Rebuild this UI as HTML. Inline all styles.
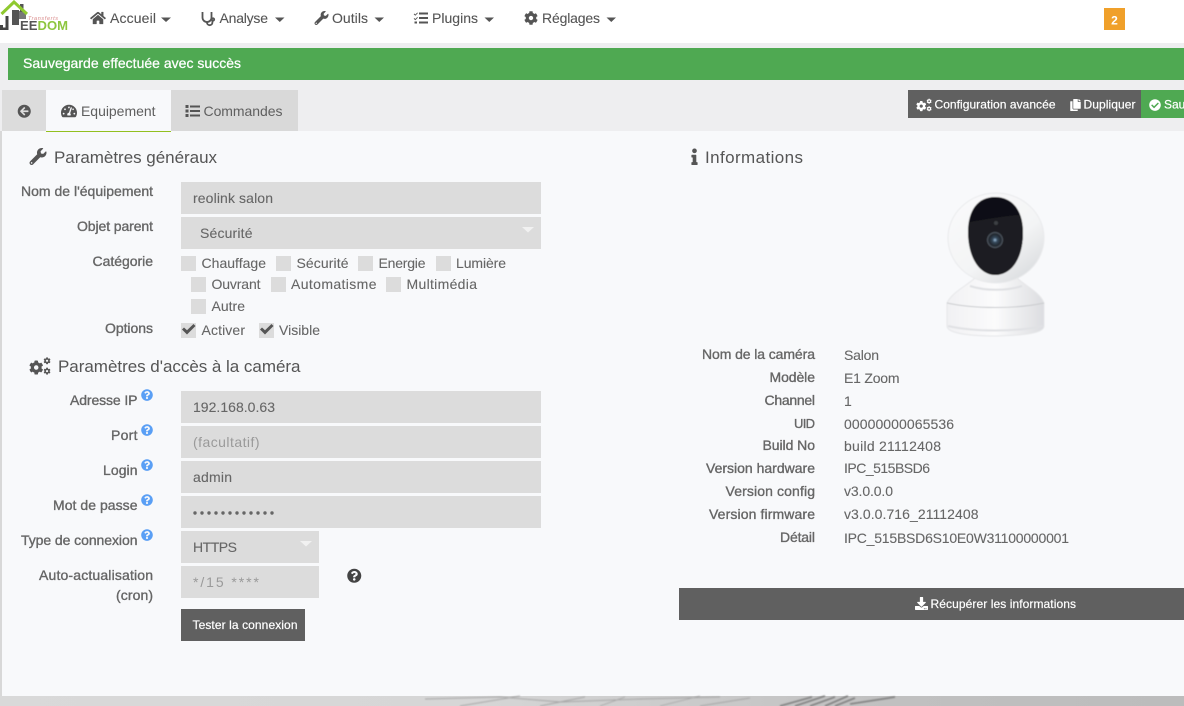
<!DOCTYPE html>
<html lang="fr"><head><meta charset="utf-8"><title>Jeedom</title>
<style>
html,body{margin:0;padding:0;width:1184px;height:706px;overflow:hidden;background:#eeeef0}
svg{display:block}
text{font-family:"Liberation Sans",sans-serif;font-size:14px;fill:#666}
.lb{fill:#666;stroke:#666;stroke-width:.35;text-anchor:end}
.v{fill:#666;stroke:#666;stroke-width:.1}
.n{fill:#555;stroke:#555;stroke-width:.1}
.h{font-size:17px;fill:#555}
.w{fill:#fff;font-size:12px;stroke:#fff;stroke-width:.2}
.f{fill:#dcdcdc}
.p{fill:#9a9a9a}
.i{fill:#555}
</style></head><body>
<svg xmlns="http://www.w3.org/2000/svg" width="1184" height="706" viewBox="0 0 1184 706">
<defs>
<symbol id="wrench" viewBox="0 0 512 512"><path d="M507.73 109.1c-2.24-9.03-13.54-12.09-20.12-5.51l-74.36 74.36-67.88-11.31-11.31-67.88 74.36-74.36c6.62-6.62 3.43-17.9-5.66-20.16-47.38-11.74-99.55.91-136.58 37.93-39.64 39.64-50.55 97.1-34.05 147.2L18.74 402.76c-24.99 24.99-24.99 65.51 0 90.5 24.99 24.99 65.51 24.99 90.5 0l213.21-213.21c50.12 16.71 107.47 5.68 147.37-34.22 37.07-37.07 49.7-89.32 37.91-136.73zM64 472c-13.25 0-24-10.75-24-24 0-13.26 10.75-24 24-24s24 10.74 24 24c0 13.25-10.75 24-24 24z"/></symbol>
<symbol id="home" viewBox="0 0 576 512"><path d="M280.37 148.26L96 300.11V464a16 16 0 0 0 16 16l112.06-.29a16 16 0 0 0 15.92-16V368a16 16 0 0 1 16-16h64a16 16 0 0 1 16 16v95.64a16 16 0 0 0 16 16.05L464 480a16 16 0 0 0 16-16V300L295.67 148.26a12.19 12.19 0 0 0-15.3 0zM571.6 251.47L488 182.56V44.05a12 12 0 0 0-12-12h-56a12 12 0 0 0-12 12v72.61L318.47 43a48 48 0 0 0-61 0L4.34 251.47a12 12 0 0 0-1.6 16.9l25.5 31A12 12 0 0 0 45.15 301l235.22-193.74a12.19 12.19 0 0 1 15.3 0L530.9 301a12 12 0 0 0 16.9-1.6l25.5-31a12 12 0 0 0-1.7-16.93z"/></symbol>
<symbol id="cog" viewBox="0 0 512 512"><path d="M487.4 315.7l-42.6-24.6c4.3-23.2 4.3-47 0-70.2l42.6-24.6c4.9-2.8 7.1-8.6 5.5-14-11.1-35.6-30-67.8-54.7-94.6-3.8-4.1-10-5.1-14.8-2.3L380.8 110c-17.9-15.4-38.5-27.3-60.8-35.1V25.8c0-5.6-3.9-10.5-9.4-11.7-36.7-8.2-74.3-7.8-109.2 0-5.5 1.2-9.4 6.1-9.4 11.7V75c-22.2 7.9-42.8 19.8-60.8 35.1L88.7 85.5c-4.9-2.8-11-1.9-14.8 2.3-24.7 26.7-43.6 58.9-54.7 94.6-1.7 5.4.6 11.2 5.5 14L67.3 221c-4.3 23.2-4.3 47 0 70.2l-42.6 24.6c-4.9 2.8-7.1 8.6-5.5 14 11.1 35.6 30 67.8 54.7 94.6 3.8 4.1 10 5.1 14.8 2.3l42.6-24.6c17.9 15.4 38.5 27.3 60.8 35.1v49.2c0 5.6 3.9 10.5 9.4 11.7 36.7 8.2 74.3 7.8 109.2 0 5.5-1.2 9.4-6.1 9.4-11.7v-49.2c22.2-7.9 42.8-19.8 60.8-35.1l42.6 24.6c4.9 2.8 11 1.9 14.8-2.3 24.7-26.7 43.6-58.9 54.7-94.6 1.5-5.5-.7-11.3-5.6-14.1zM256 336c-44.1 0-80-35.9-80-80s35.9-80 80-80 80 35.9 80 80-35.9 80-80 80z"/></symbol>
<symbol id="q" viewBox="0 0 512 512"><path d="M504 256c0 136.997-111.043 248-248 248S8 392.997 8 256C8 119.083 119.043 8 256 8s248 111.083 248 248zM262.655 90c-54.497 0-89.255 22.957-116.549 63.758-3.536 5.286-2.353 12.415 2.715 16.258l34.699 26.31c5.205 3.947 12.621 3.008 16.665-2.122 17.864-22.658 30.113-35.797 57.303-35.797 20.429 0 45.698 13.148 45.698 32.958 0 14.976-12.363 22.667-32.534 33.976C247.128 238.528 216 254.941 216 296v4c0 6.627 5.373 12 12 12h56c6.627 0 12-5.373 12-12v-1.333c0-28.462 83.186-29.647 83.186-106.667 0-58.002-60.165-102-116.531-102zM256 338c-25.365 0-46 20.635-46 46 0 25.364 20.635 46 46 46s46-20.636 46-46c0-25.365-20.635-46-46-46z"/></symbol>
<symbol id="chk" viewBox="0 0 512 512"><path d="M504 256c0 136.967-111.033 248-248 248S8 392.967 8 256 119.033 8 256 8s248 111.033 248 248zM227.314 387.314l184-184c6.248-6.248 6.248-16.379 0-22.627l-22.627-22.627c-6.248-6.249-16.379-6.249-22.628 0L216 308.118l-70.059-70.059c-6.248-6.248-16.379-6.248-22.628 0l-22.627 22.627c-6.248 6.248-6.248 16.379 0 22.627l104 104c6.249 6.249 16.379 6.249 22.628.001z"/></symbol>
<symbol id="back" viewBox="0 0 512 512"><path d="M256 504C119 504 8 393 8 256S119 8 256 8s248 111 248 248-111 248-248 248zm28.9-143.6L209.4 288H392c13.3 0 24-10.7 24-24v-16c0-13.3-10.7-24-24-24H209.4l75.5-72.4c9.7-9.3 9.9-24.8.4-34.3l-11-10.9c-9.4-9.4-24.6-9.4-33.9 0L107.7 239c-9.4 9.4-9.4 24.6 0 33.9l132.7 132.7c9.4 9.4 24.6 9.4 33.9 0l11-11c9.5-9.5 9.3-25-.4-34.3z"/></symbol>
<symbol id="dl" viewBox="0 0 512 512"><path d="M216 0h80c13.3 0 24 10.7 24 24v168h87.7c17.8 0 26.7 21.5 14.1 34.1L269.7 378.3c-7.5 7.5-19.8 7.5-27.3 0L90.1 226.1c-12.6-12.6-3.7-34.1 14.1-34.1H192V24c0-13.3 10.7-24 24-24zm296 376v112c0 13.3-10.7 24-24 24H24c-13.3 0-24-10.7-24-24V376c0-13.3 10.7-24 24-24h146.7l49 49c20.1 20.1 52.5 20.1 72.6 0l49-49H488c13.3 0 24 10.7 24 24zm-124 88c0-11-9-20-20-20s-20 9-20 20 9 20 20 20 20-9 20-20zm64 0c0-11-9-20-20-20s-20 9-20 20 9 20 20 20 20-9 20-20z"/></symbol>
<symbol id="copy" viewBox="0 0 448 512"><path d="M320 448v40c0 13.255-10.745 24-24 24H24c-13.255 0-24-10.745-24-24V120c0-13.255 10.745-24 24-24h72v296c0 30.879 25.121 56 56 56h168zm0-344V0H152c-13.255 0-24 10.745-24 24v368c0 13.255 10.745 24 24 24h272c13.255 0 24-10.745 24-24V128H344c-13.2 0-24-10.8-24-24zm120.971-31.029L375.029 7.029A24 24 0 0 0 358.059 0H352v96h96v-6.059a24 24 0 0 0-7.029-16.97z"/></symbol>
<symbol id="info" viewBox="0 0 192 512"><path d="M20 424.229h20V279.771H20c-11.046 0-20-8.954-20-20V212c0-11.046 8.954-20 20-20h112c11.046 0 20 8.954 20 20v212.229h20c11.046 0 20 8.954 20 20V492c0 11.046-8.954 20-20 20H20c-11.046 0-20-8.954-20-20v-47.771c0-11.046 8.954-20 20-20zM96 0C56.235 0 24 32.235 24 72s32.235 72 72 72 72-32.235 72-72S135.764 0 96 0z"/></symbol>
<symbol id="tach" viewBox="0 0 576 512"><path d="M288 32C128.94 32 0 160.94 0 320c0 52.8 14.25 102.26 39.06 144.8 5.61 9.62 16.3 15.2 27.44 15.2h443c11.14 0 21.83-5.58 27.44-15.2C561.75 422.26 576 372.8 576 320c0-159.06-128.94-288-288-288zm0 64c14.71 0 26.58 10.13 30.32 23.65-1.11 2.26-2.64 4.23-3.45 6.67l-9.22 27.67c-5.13 3.49-10.97 6.01-17.64 6.01-17.67 0-32-14.33-32-32S270.33 96 288 96zM96 384c-17.67 0-32-14.33-32-32s14.33-32 32-32 32 14.33 32 32-14.33 32-32 32zm48-160c-17.67 0-32-14.33-32-32s14.33-32 32-32 32 14.33 32 32-14.33 32-32 32zm246.77-72.41l-61.33 184C343.13 347.33 352 364.54 352 384c0 11.72-3.38 22.55-8.88 32H232.88c-5.5-9.45-8.88-20.28-8.88-32 0-33.94 26.5-61.43 59.9-63.59l61.34-184.01c4.17-12.56 17.73-19.45 30.36-15.17 12.57 4.19 19.35 17.79 15.17 30.36zm14.66 57.2l15.52-46.55c3.47-1.29 7.13-2.23 11.05-2.23 17.67 0 32 14.33 32 32s-14.33 32-32 32c-11.38-.01-20.89-6.28-26.57-15.22zM480 384c-17.67 0-32-14.33-32-32s14.33-32 32-32 32 14.33 32 32-14.33 32-32 32z"/></symbol>
<symbol id="cogs" viewBox="0 0 640 512"><use href="#cog" x="0" y="90" width="420" height="420"/><use href="#cog" x="420" y="0" width="210" height="210"/><use href="#cog" x="420" y="300" width="210" height="210"/></symbol>
<symbol id="tick" viewBox="0 0 15 15"><path d="M1 7.500L3 5.500 6 8.300 12.500 2 14.500 4 6 12.500z"/></symbol>
<linearGradient id="ball" x1="0.1" y1="0" x2="0.9" y2="1"><stop offset="0" stop-color="#fafafb"/><stop offset=".6" stop-color="#f3f4f5"/><stop offset="1" stop-color="#d6d8db"/></linearGradient>
<linearGradient id="base" x1="0" y1="0" x2="1" y2="0"><stop offset="0" stop-color="#f1f1f3"/><stop offset=".5" stop-color="#fbfbfc"/><stop offset="1" stop-color="#dcdde0"/></linearGradient>
<radialGradient id="lens"><stop offset="0" stop-color="#9fc0dc"/><stop offset=".3" stop-color="#35495c"/><stop offset=".75" stop-color="#20252c"/><stop offset="1" stop-color="#59616c"/></radialGradient>
<filter id="soft" x="-10%" y="-10%" width="120%" height="120%"><feGaussianBlur stdDeviation=".6"/></filter>
<filter id="soft2" x="-5%" y="-50%" width="110%" height="200%"><feGaussianBlur stdDeviation=".7"/></filter>
<linearGradient id="bot" x1="0" y1="0" x2="1" y2="0"><stop offset="0" stop-color="#d9d9d9"/><stop offset=".4" stop-color="#d6d6d6"/><stop offset=".75" stop-color="#c0c0c0"/><stop offset="1" stop-color="#bcbcbc"/></linearGradient>
</defs>

<!-- page backgrounds -->
<rect width="1184" height="706" fill="#eeeef0"/>
<rect width="1184" height="43" fill="#fff"/>
<rect x="0" y="131" width="2" height="565" fill="#d8d8d8"/>
<rect x="2" y="131" width="1182" height="565" fill="#f8f9fb"/>
<rect y="696" width="1184" height="10" fill="url(#bot)"/>
<g stroke="#a4a4a4" stroke-width=".9" fill="none" filter="url(#soft2)">
<path d="M425 699L500 697 560 702 640 699 720 697M460 706L520 696M540 706L585 697M600 706L625 697M660 706L700 696M700 706L750 698"/>
<path d="M780 706L812 697M795 706L825 696M810 706L835 697M825 706L848 696M835 706L855 698M850 704L895 697" stroke="#7c7c7c" stroke-width="1.600"/>
</g>

<!-- logo -->
<g>
<rect x="12" y="10" width="7" height="15" fill="#555"/>
<rect x="19" y="11" width="7" height="8" fill="#777"/>
<rect x="20" y="4" width="3.500" height="8" fill="#555"/>
<path d="M1.500 14L14 2 27 14" fill="none" stroke="#8fc92f" stroke-width="3"/>
<path d="M0 25H3V27.500H5.500V16H8.500V30H0z" fill="#444"/>
<text x="20" y="30" lengthAdjust="spacingAndGlyphs" textLength="17.500" style="font-size:12.600px;font-weight:700;fill:#555">EE</text>
<text x="37.500" y="30" lengthAdjust="spacingAndGlyphs" textLength="30.500" style="font-size:12.600px;font-weight:700;fill:#8dc63f">DOM</text>
<text x="28" y="20" style="font-size:5.500px;fill:#d98a8a;font-style:italic" textLength="30">Transferts</text>
</g>

<!-- nav -->
<use href="#home" x="90" y="11" width="16" height="14" class="i"/>
<text class="n" x="110" y="23" textLength="46">Accueil</text>
<path d="M161 17.500h10l-5 4.500z" fill="#555"/>
<g fill="none" stroke="#555" stroke-width="1.800"><path d="M202.500 12v5.500a4.500 4.500 0 0 0 9 0V12"/><path d="M207 22v.5a2.700 2.700 0 0 0 5.400 0V21"/><circle cx="213" cy="19.500" r="1.200"/></g>
<text class="n" x="219.500" y="23" textLength="48.500">Analyse</text>
<path d="M275 17.500h9.500l-4.700 4.500z" fill="#555"/>
<use href="#wrench" x="314" y="11" width="15" height="14" class="i"/>
<text class="n" x="332" y="23" textLength="36">Outils</text>
<path d="M374.500 17.500h9.500l-4.700 4.500z" fill="#555"/>
<g fill="#555"><rect x="419" y="12.500" width="9" height="2"/><rect x="419" y="17" width="9" height="2"/><rect x="419" y="21.500" width="9" height="2"/><path d="M414.300 13.500l1 1 2-2 .6.6-2.600 2.700-1.600-1.600zM414.300 18l1 1 2-2 .6.6-2.600 2.700-1.600-1.600z"/><rect x="414.500" y="21.500" width="2.500" height="2"/></g>
<text class="n" x="432" y="23" textLength="46">Plugins</text>
<path d="M484.500 17.500h9.500l-4.700 4.500z" fill="#555"/>
<use href="#cog" x="524" y="11" width="14" height="14" class="i"/>
<text class="n" x="542" y="23" textLength="58">Réglages</text>
<path d="M606.500 17.500h9.500l-4.700 4.500z" fill="#555"/>
<rect x="1104" y="8" width="21" height="22" fill="#f0a02a"/>
<text x="1114.500" y="24.500" text-anchor="middle" style="font-size:12px;font-weight:700;fill:#fff">2</text>

<!-- alert -->
<rect x="8" y="48" width="1176" height="32" fill="#4fa952"/>
<text x="23" y="68" textLength="218" style="fill:#fff;stroke:#fff;stroke-width:.25">Sauvegarde effectuée avec succès</text>

<!-- tabs -->
<rect x="2" y="90" width="44" height="41" fill="#dcdcdc"/>
<use href="#back" x="17.500" y="104.500" width="13.500" height="13.500" class="i"/>
<rect x="46" y="90" width="125" height="41" fill="#f8f9fb"/>
<rect x="46" y="131" width="125" height="1" fill="#93c01f"/>
<use href="#tach" x="61" y="103.500" width="16" height="15" class="i"/>
<text x="81" y="116" textLength="74.500" style="fill:#5f5f5f">Equipement</text>
<rect x="171" y="90" width="127" height="41" fill="#d9d9d9"/>
<g fill="#555"><rect x="185.500" y="105" width="3" height="3"/><rect x="185.500" y="109.500" width="3" height="3"/><rect x="185.500" y="114" width="3" height="3"/><rect x="190" y="105.500" width="10" height="2"/><rect x="190" y="110" width="10" height="2"/><rect x="190" y="114.500" width="10" height="2"/></g>
<text x="203.500" y="116" textLength="79" style="fill:#5f5f5f">Commandes</text>

<!-- action buttons -->
<rect x="908" y="90" width="233" height="28" fill="#606060"/>
<rect x="1141" y="90" width="43" height="28" fill="#4fa952"/>
<use href="#cogs" x="916" y="98.500" width="16" height="13" fill="#fff"/>
<text class="w" x="934.500" y="108.500" textLength="121">Configuration avancée</text>
<use href="#copy" x="1070" y="99" width="11" height="12" fill="#fff"/>
<text class="w" x="1083.500" y="108.500" textLength="52">Dupliquer</text>
<use href="#chk" x="1149" y="99" width="12" height="12" fill="#fff"/>
<text class="w" x="1164" y="108.500">Sauvegarder</text>

<!-- section headings -->
<use href="#wrench" x="29" y="148" width="18" height="17" class="i"/>
<text class="h" x="54" y="163" textLength="163">Paramètres généraux</text>
<use href="#cogs" x="29" y="357" width="22" height="18" class="i"/>
<text class="h" x="58" y="372" textLength="242.500">Paramètres d'accès à la caméra</text>
<use href="#info" x="691" y="148.500" width="7" height="16.500" class="i"/>
<text class="h" x="705" y="163" textLength="98">Informations</text>

<!-- general form -->
<text class="lb" x="153" y="196" textLength="132">Nom de l'équipement</text>
<rect class="f" x="181" y="182" width="360" height="32"/>
<text class="v" x="193" y="203" textLength="80">reolink salon</text>
<text class="lb" x="153" y="231" textLength="76">Objet parent</text>
<rect class="f" x="181" y="217" width="360" height="32"/>
<text class="v" x="200" y="238" textLength="52.500">Sécurité</text>
<path d="M522 227h12l-6 5.500z" fill="#f1f1f1"/>
<text class="lb" x="153" y="266" textLength="60.500">Catégorie</text>
<g class="f">
<rect x="181" y="256" width="15" height="15"/><rect x="276" y="256" width="15" height="15"/><rect x="358" y="256" width="15" height="15"/><rect x="436" y="256" width="15" height="15"/>
<rect x="191" y="277" width="15" height="15"/><rect x="271" y="277" width="15" height="15"/><rect x="386" y="277" width="15" height="15"/>
<rect x="191" y="299" width="15" height="15"/>
<rect x="181" y="323" width="15" height="15"/><rect x="259" y="323" width="15" height="15"/>
</g>
<text class="v" x="201.500" y="268" textLength="64.500">Chauffage</text>
<text class="v" x="296.500" y="268" textLength="52">Sécurité</text>
<text class="v" x="378.500" y="268" textLength="47">Energie</text>
<text class="v" x="456" y="268" textLength="50">Lumière</text>
<text class="v" x="211.500" y="289" textLength="49">Ouvrant</text>
<text class="v" x="291" y="289" textLength="85.500">Automatisme</text>
<text class="v" x="406.500" y="289" textLength="70.500">Multimédia</text>
<text class="v" x="211.500" y="311" textLength="33.500">Autre</text>
<text class="lb" x="153" y="333" textLength="48">Options</text>
<use href="#tick" x="181" y="322" width="15" height="15" class="i"/>
<use href="#tick" x="259" y="322" width="15" height="15" class="i"/>
<text class="v" x="201.500" y="335" textLength="43.500">Activer</text>
<text class="v" x="279" y="335" textLength="41">Visible</text>

<!-- access form -->
<text class="lb" x="137.500" y="405" textLength="67.500">Adresse IP</text>
<text class="lb" x="137.500" y="440" textLength="26.500">Port</text>
<text class="lb" x="137.500" y="475" textLength="34.500">Login</text>
<text class="lb" x="137.500" y="510" textLength="84.500">Mot de passe</text>
<text class="lb" x="137.500" y="545" textLength="116.500">Type de connexion</text>
<text class="lb" x="153" y="580" textLength="114">Auto-actualisation</text>
<text class="lb" x="153" y="600" textLength="37">(cron)</text>
<g fill="#5a9ff5">
<use href="#q" x="141" y="389" width="12" height="12"/><use href="#q" x="141" y="424" width="12" height="12"/><use href="#q" x="141" y="459" width="12" height="12"/><use href="#q" x="141" y="494" width="12" height="12"/><use href="#q" x="141" y="529" width="12" height="12"/>
</g>
<g class="f">
<rect x="181" y="391" width="360" height="32"/><rect x="181" y="426" width="360" height="32"/><rect x="181" y="461" width="360" height="32"/><rect x="181" y="496" width="360" height="32"/>
<rect x="181" y="531" width="138" height="32"/><rect x="181" y="566" width="138" height="32"/>
</g>
<text class="v" x="193" y="412" textLength="82">192.168.0.63</text>
<text class="p" x="193" y="447" textLength="66.500">(facultatif)</text>
<text class="v" x="193" y="482" textLength="39">admin</text>
<g fill="#666"><circle cx="195" cy="513" r="1.700"/><circle cx="202" cy="513" r="1.700"/><circle cx="209" cy="513" r="1.700"/><circle cx="216" cy="513" r="1.700"/><circle cx="223" cy="513" r="1.700"/><circle cx="230" cy="513" r="1.700"/><circle cx="237" cy="513" r="1.700"/><circle cx="244" cy="513" r="1.700"/><circle cx="251" cy="513" r="1.700"/><circle cx="258" cy="513" r="1.700"/><circle cx="265" cy="513" r="1.700"/><circle cx="272" cy="513" r="1.700"/></g>
<text class="v" x="193" y="552" textLength="44">HTTPS</text>
<path d="M300 541h12l-6 5.500z" fill="#f1f1f1"/>
<text class="p" x="193" y="587" textLength="66">*/15 ****</text>
<use href="#q" x="347" y="568.500" width="14.500" height="14.500" fill="#444"/>
<rect x="181" y="609" width="124" height="32" fill="#606060"/>
<text class="w" x="192.500" y="629" textLength="105">Tester la connexion</text>

<!-- camera -->
<g filter="url(#soft)">
<path d="M947 303C952 292 968 285 975 278H1017C1024 285 1040 292 1044 303V326C1044 331 1036 335 997 336 958 336 947 331 947 326z" fill="url(#base)" stroke="#e6e7e9" stroke-width="1"/>
<path d="M970 286C985 291 1007 291 1022 286" fill="none" stroke="#dfe0e3" stroke-width="2"/>
<path d="M947 303C975 309 1016 309 1044 303" fill="none" stroke="#c9cbce" stroke-width="1"/>
<path d="M948 326C975 332 1016 332 1043 326" fill="none" stroke="#e0e1e4" stroke-width="2"/>
<ellipse cx="996" cy="238" rx="48" ry="45" fill="url(#ball)" stroke="#e9eaec" stroke-width="1"/>
<path d="M995 197C1012 197 1023 210 1023 232 1023 258 1012 275 995 275 980 275 968 258 968 232 968 210 978 197 995 197z" fill="#101113"/>
<path d="M970 222C982 220 1005 216 1019 215 1022 222 1023 228 1023 233 1023 258 1012 274 995 274 980 274 969 257 968 232z" fill="#1b1c20"/>
<circle cx="995" cy="240" r="8" fill="url(#lens)"/>
<circle cx="996" cy="223" r="2" fill="#3d3f44"/>
</g>

<!-- info list -->
<text class="lb" x="815" y="359" textLength="113">Nom de la caméra</text>
<text class="lb" x="815" y="382" textLength="45.500">Modèle</text>
<text class="lb" x="815" y="405" textLength="50.500">Channel</text>
<text class="lb" x="815" y="428" textLength="21" style="font-size:13px">UID</text>
<text class="lb" x="815" y="450" textLength="52.500">Build No</text>
<text class="lb" x="815" y="473" textLength="109">Version hardware</text>
<text class="lb" x="815" y="496" textLength="89.500">Version config</text>
<text class="lb" x="815" y="519" textLength="106">Version firmware</text>
<text class="lb" x="815" y="542" textLength="35">Détail</text>
<text class="v" x="844" y="360" textLength="35">Salon</text>
<text class="v" x="844" y="383" textLength="55.500">E1 Zoom</text>
<text class="v" x="844" y="406">1</text>
<text class="v" x="844" y="429" textLength="110">00000000065536</text>
<text class="v" x="844" y="451" textLength="97">build 21112408</text>
<text class="v" x="844" y="473" textLength="86">IPC_515BSD6</text>
<text class="v" x="844" y="496" textLength="49">v3.0.0.0</text>
<text class="v" x="844" y="519" textLength="134.500">v3.0.0.716_21112408</text>
<text class="v" x="844" y="543" textLength="225">IPC_515BSD6S10E0W31100000001</text>
<rect x="679" y="588" width="505" height="32" fill="#606060"/>
<use href="#dl" x="915" y="597" width="13" height="13" fill="#fff"/>
<text class="w" x="930.500" y="608" textLength="145.500">Récupérer les informations</text>
</svg>
</body></html>
